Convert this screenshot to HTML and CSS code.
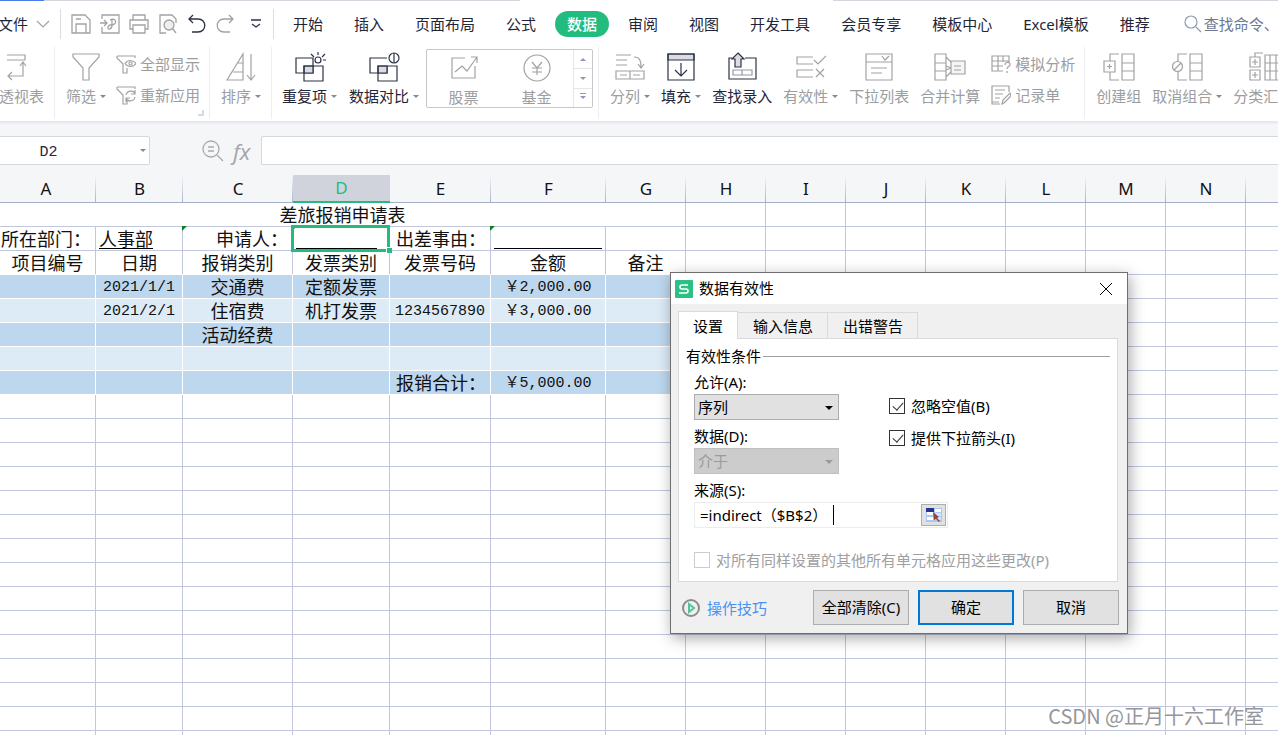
FILE: index.html
```html
<!DOCTYPE html>
<html lang="zh-CN">
<head>
<meta charset="utf-8">
<title>差旅报销申请表</title>
<link rel="stylesheet" href="styles.css">
</head>
<body>
<header class="toolbar">
  <div class="doc-strip"><span class="strip-active"></span><span class="strip-tab"></span><span class="strip-gap"></span><span class="strip-rest"></span></div>
  <nav class="menu">
    <button class="file-btn">文件<svg width="14" height="8" viewBox="0 0 14 8"><path d="M1 1l6 6 6-6"/></svg></button>
    <span class="menu-sep"></span>
    <div class="quick">
      <button aria-label="保存"><svg width="20" height="20" viewBox="0 0 20 20"><path d="M1 1h13l5 5v13H1zM5 19v-9h10v9M5 5h5"/></svg></button>
      <button aria-label="输出为PDF"><svg width="20" height="20" viewBox="0 0 20 20"><path d="M2 5V1h17v18H2v-6M0 9h7M4 6l3 3-3 3M10 6c6-3 8 4 2 5M12 6v5c0 5-5 5-4 2s5-2 5-2"/></svg></button>
      <button aria-label="打印"><svg width="20" height="20" viewBox="0 0 20 20"><path d="M4 6V1h12v5M4 15H1V6h18v9h-3M4 11h12v8H4z"/></svg></button>
      <button aria-label="打印预览"><svg width="20" height="20" viewBox="0 0 20 20"><path d="M8 19H2V1h12l4 4v4M14 14l4 5"/><circle cx="11" cy="11" r="5" fill="#eee"/></svg></button>
      <button aria-label="撤销" class="dark"><svg width="20" height="20" viewBox="0 0 20 20"><path d="M6 1L2 5l4 4M2 5h9c9 0 9 13 0 13H5"/></svg></button>
      <button aria-label="恢复"><svg width="20" height="20" viewBox="0 0 20 20"><path d="M13 1l4 4-4 4M17 5H8c-9 0-9 13 0 13h6"/></svg></button>
      <button aria-label="更多" class="more dark"><svg width="10" height="10" viewBox="0 0 10 10"><path d="M0 1h10M1 5l4 3 4-3"/></svg></button>
    </div>
    <span class="menu-sep"></span>
    <div class="tabs">
      <button>开始</button><button>插入</button><button>页面布局</button><button>公式</button><button class="on">数据</button><button>审阅</button><button>视图</button><button>开发工具</button><button>会员专享</button><button>模板中心</button><button>Excel模板</button><button>推荐</button>
    </div>
    <button class="search"><svg width="18" height="18" viewBox="0 0 18 18"><circle cx="7" cy="7" r="6"/><path d="M12 12l5 5"/></svg>查找命令、</button>
  </nav>
  <div class="ribbon">
    <div class="group first">
      <button class="big"><svg width="30" height="30" viewBox="0 0 30 30"><path d="M-5 3h23v5H-5zM16 11v13H2M13 14l3-4 3 4M5 20l-4 4 4 4"/></svg><span>透视表</span></button>
    </div>
    <div class="group filter">
      <button class="big"><svg width="30" height="30" viewBox="0 0 30 30"><path d="M2 2h26v3L18 16v12h-6V16L2 5z"/></svg><span class="arrow">筛选</span></button>
      <div class="stack">
        <button><svg width="20" height="20" viewBox="0 0 20 20"><path d="M1 2h18v2M1 2v2l6 6v9h4v-5"/><path d="M9 9.500c3-4 8-4 11 0-3 4-8 4-11 0z"/><circle cx="14.500" cy="9.500" r="1.500"/></svg>全部显示</button>
        <button><svg width="20" height="20" viewBox="0 0 20 20"><path d="M1 2h18v2M1 2v2l6 6v9h4v-3M10 10c1-5 8-5 9-1M19 5v4h-4M19 12c-1 5-8 5-9 1M10 17v-4h4"/></svg>重新应用</button>
      </div>
      <i class="corner"></i>
    </div>
    <div class="group sort">
      <button class="big"><svg width="30" height="30" viewBox="0 0 30 30"><path d="M17 2v26H1zM12 11h5M7 20h10M25 2v25M21 23l4 5 4-5"/></svg><span class="arrow">排序</span></button>
    </div>
    <div class="group dup">
      <button class="big dark"><svg width="32" height="30" viewBox="0 0 32 30"><path d="M2 6h17v15H2z"/><path d="M10 14h9v7h-9z" fill="#dcdde2"/><path d="M19 14h10v15H10V14z"/><circle cx="24" cy="8" r="3"/><path d="M24 0v3M17 2l3 3M31 2l-3 3M29 8h3"/></svg><span class="arrow">重复项</span></button>
      <button class="big dark"><svg width="32" height="30" viewBox="0 0 32 30"><path d="M19 6H2v15h17v-7"/><path d="M10 14h9v7h-9z" fill="#dcdde2"/><path d="M10 14h19v15H10z"/><circle cx="26" cy="6" r="5" fill="#fff"/><path d="M26 1v10"/></svg><span class="arrow">数据对比</span></button>
      <div class="gallery">
        <button class="big"><svg width="30" height="30" viewBox="0 0 30 30"><path d="M16 5H3v20h23V13M6 19l7-6 5 5L28 4M22 4h6v6"/></svg><span>股票</span></button>
        <button class="big"><svg width="30" height="30" viewBox="0 0 30 30"><circle cx="15" cy="15" r="13"/><path d="M10 9l5 6 5-6M15 15v7M10 15h10M10 19h10"/></svg><span>基金</span></button>
        <div class="spin"><button aria-label="上一行"><i class="up"></i></button><button aria-label="下一行"><i class="down"></i></button><button aria-label="展开"><i class="down line"></i></button></div>
      </div>
    </div>
    <div class="group tools">
      <button class="big"><svg width="30" height="30" viewBox="0 0 30 30"><path d="M1 3h15M1 8h11M1 13h11M1 19h28v8H1zM15 19v8M5 23h7M18 23h7M19 5c6 0 7 4 7 10M23 12l3 4 3-4"/></svg><span class="arrow">分列</span></button>
      <button class="big dark"><svg width="30" height="30" viewBox="0 0 30 30"><path d="M2 2h26v6H2z" fill="#dcdde2"/><path d="M2 2h26v26H2zM15 11v13M9 18l6 6 6-6"/></svg><span class="arrow">填充</span></button>
      <button class="big dark"><svg width="32" height="30" viewBox="0 0 32 30"><path d="M6 6H3v21h27V6H19"/><path d="M7 18h19v5H7zM16 18v5" opacity=".5"/><path d="M12 1l6 6h-3v8H9V7H6z" fill="#dcdde2"/></svg><span>查找录入</span></button>
      <button class="big"><svg width="30" height="30" viewBox="0 0 30 30"><path d="M17 5H1v7h16M17 18H1v7h16M18 8l4 4 8-8M20 17l8 8M28 17l-8 8"/></svg><span class="arrow">有效性</span></button>
      <button class="big"><svg width="30" height="30" viewBox="0 0 30 30"><path d="M2 2h26v26H2zM2 10h26M18 4l3 4 4-4M7 16h16M7 21h11"/></svg><span>下拉列表</span></button>
      <button class="big"><svg width="32" height="30" viewBox="0 0 32 30"><path d="M1 2h11v26H1zM1 11h11M1 19h11M12 5l6 6M12 25l6-6M12 14l5 2M12 18l5-2"/><path d="M17 9h14v13H17z" fill="#f5f5f5"/><path d="M20 14h7M20 18h7"/></svg><span>合并计算</span></button>
      <div class="stack">
        <button><svg width="20" height="20" viewBox="0 0 20 20"><path d="M12 17H1V2h17v6M1 7h17M1 12h11M7 2v15M12 2v6M14 11c0-4 6-3 5 0-1 2-3 2-3 4M16 17v2"/></svg>模拟分析</button>
        <button><svg width="20" height="20" viewBox="0 0 20 20"><path d="M8 17H1V1h17v6M4 5h10M4 9h8M4 13h5M1 17v2h8M11 19l1-4 7-7 1 3-7 7z"/></svg>记录单</button>
      </div>
    </div>
    <div class="group outline">
      <button class="big"><svg width="32" height="30" viewBox="0 0 32 30"><path d="M16 2H7v7M7 20v8h9M1 9h11v11H1zM4 14.500h5M6.500 12v5M19 2h12v26H19zM19 11h12M19 19h12"/></svg><span>创建组</span></button>
      <button class="big"><svg width="32" height="30" viewBox="0 0 32 30"><path d="M16 2H7v7M7 20v8h9M19 2h12v26H19zM19 11h12M19 19h12M3 18l7-7"/><circle cx="6.500" cy="14.500" r="5"/></svg><span class="arrow">取消组合</span></button>
      <button class="big"><svg width="32" height="30" viewBox="0 0 32 30"><path d="M3 5h10v10H3zM3 18h10v10H3zM5 10h6M8 7v6M5 23h6M8 20v6M8 5V1h8M18 3h22v25H18zM18 11h22M18 19h22M23 3v25M29 3v25"/></svg><span>分类汇总</span></button>
    </div>
  </div>
</header>

<div class="formula-bar">
  <label class="name-box"><input type="text" value="D2" aria-label="名称框"></label>
  <svg class="lookup" width="22" height="22" viewBox="0 0 22 22"><circle cx="9" cy="9" r="8"/><path d="M15 15l6 6M6 7h6M6 11h6"/></svg>
  <span class="fx">fx</span>
  <input class="formula" type="text" aria-label="编辑栏">
</div>

<main class="sheet">
  <table>
    <colgroup><col class="ca"><col class="cb"><col class="cc"><col class="cd"><col class="ce"><col class="cf"><col span="9"></colgroup>
    <thead><tr><th>A</th><th>B</th><th>C</th><th class="sel">D</th><th>E</th><th>F</th><th>G</th><th>H</th><th>I</th><th>J</th><th>K</th><th>L</th><th>M</th><th>N</th><th></th></tr></thead>
    <tbody id="rows">
      <tr><td colspan="7">差旅报销申请表</td></tr>
      <tr><td class="left">所在部门：</td><td class="left"><span class="fill">人事部</span></td><td class="right flag">申请人：</td><td class="left flag active"><span class="fill num">&nbsp;&nbsp;&nbsp;&nbsp;&nbsp;&nbsp;&nbsp;&nbsp;&nbsp;</span></td><td class="label">出差事由：</td><td class="left flag"><span class="fill num">&nbsp;&nbsp;&nbsp;&nbsp;&nbsp;&nbsp;&nbsp;&nbsp;&nbsp;&nbsp;&nbsp;&nbsp;</span></td></tr>
      <tr class="heads"><td>项目编号</td><td>日期</td><td>报销类别</td><td>发票类别</td><td>发票号码</td><td>金额</td><td>备注</td></tr>
      <tr class="band-a"><td></td><td class="num">2021/1/1</td><td>交通费</td><td>定额发票</td><td></td><td class="num">￥2,000.00</td></tr>
      <tr class="band-b"><td></td><td class="num">2021/2/1</td><td>住宿费</td><td>机打发票</td><td class="num">1234567890</td><td class="num">￥3,000.00</td></tr>
      <tr class="band-a"><td></td><td></td><td>活动经费</td></tr>
      <tr class="band-b"></tr>
      <tr class="band-a"><td></td><td></td><td></td><td></td><td class="label">报销合计：</td><td class="num">￥5,000.00</td></tr>
    </tbody>
  </table>
</main>

<section class="dialog" role="dialog" aria-label="数据有效性">
  <div class="title">
    <svg width="18" height="18" viewBox="0 0 18 18"><rect width="18" height="18" rx="1" fill="#2bc084"/><path d="M13 5H7q-2 0-2 2t2 2h4q2 0 2 2t-2 2H4" fill="none" stroke="#fff" stroke-width="1.600"/></svg>
    <h1>数据有效性</h1>
    <button aria-label="关闭"><svg width="14" height="14" viewBox="0 0 14 14"><path d="M1 1l12 12M13 1L1 13" stroke="#000"/></svg></button>
  </div>
  <div class="dlg-tabs"><button class="on">设置</button><button>输入信息</button><button>出错警告</button></div>
  <div class="panel">
    <h2>有效性条件</h2>
    <div class="form">
      <div class="fields">
        <label for="allow">允许(A):</label>
        <div class="select"><select id="allow"><option>序列</option></select></div>
        <label for="cond">数据(D):</label>
        <div class="select off"><select id="cond" disabled><option>介于</option></select></div>
        <label for="src">来源(S):</label>
        <div class="source"><input id="src" type="text" value="=indirect（$B$2）"><i class="caret"></i>
          <button aria-label="选择区域"><svg width="16" height="14" viewBox="0 0 16 14"><path d="M0 0h16v14H0z" fill="#a9c8f8"/><path d="M1 4h6v3H1zM1 9h6v3H1zM9 1h6v3H9z" fill="#fff"/><path d="M8 5h7v3H8zM9 9h6v3H9z" fill="#d3e3ff"/><path d="M0 0h8v4H0z" fill="#28348c"/><path d="M7 4l6 5-2 1 3 3-1 1-3-3-2 1z" fill="#9b4432"/></svg></button>
        </div>
      </div>
      <div class="checks">
        <label><input type="checkbox" checked>忽略空值(B)</label>
        <label><input type="checkbox" checked>提供下拉箭头(I)</label>
      </div>
    </div>
    <label class="apply"><input type="checkbox" disabled>对所有同样设置的其他所有单元格应用这些更改(P)</label>
  </div>
  <div class="actions">
    <a href="#"><svg width="18" height="18" viewBox="0 0 18 18" fill="none"><circle cx="9" cy="9" r="8" stroke="#8c8c8c" stroke-width="2"/><path d="M7 5v8l5-4z" stroke="#4fc795" stroke-width="2"/></svg>操作技巧</a>
    <button>全部清除(C)</button><button class="primary">确定</button><button>取消</button>
  </div>
</section>
<p class="credit">CSDN @正月十六工作室</p>
<script src="script.js"></script>
</body>
</html>
```
FILE: styles.css
```css
* { box-sizing: border-box; }
body {
  margin: 0; height: 100vh; overflow: hidden; position: relative;
  display: flex; flex-direction: column; background: #fff; color: #1f2638;
  font: 15px/22px "Noto Sans", "Noto Sans CJK SC", sans-serif;
}
button { font: inherit; color: inherit; background: none; border: 0; padding: 0; white-space: nowrap; }
input, select { font: inherit; color: inherit; }
h1, h2, p { margin: 0; font: inherit; }
svg { flex: none; }

/* menu bar */
.toolbar { flex: none; border-bottom: 1px solid #e6e7e9; box-shadow: 0 1px 2px #e4e5e8; position: relative; }
.doc-strip { display: flex; height: 1px; }
.strip-active { width: 44px; background: #4a7df0; }
.strip-tab { width: 476px; background: #d4d6dd; }
.strip-gap { width: 313px; }
.strip-rest { flex: 1; background: #d4d6dd; }
.menu { display: flex; align-items: center; height: 46px; overflow: hidden; }
.menu svg, .ribbon svg { fill: none; stroke: #a2a2a5; stroke-width: 1.2; }
.file-btn { flex: none; display: flex; align-items: center; gap: 8px; margin-left: -2px; width: 62px; }
.menu-sep { width: 1px; height: 30px; background: #dcdee3; flex: none; }
.quick { display: flex; align-items: center; gap: 9px; padding: 0 12px 0 10px; flex: none; }
.quick button { display: flex; }
.quick svg { stroke-width: 1.3; }
.quick .more { margin: 0 0 0 6px; }
.menu .dark svg, .ribbon .dark svg { stroke: #2b3245; }
.tabs { display: flex; gap: 7px; padding-left: 7px; flex: none; }
.tabs button { padding: 2px 12px; border-radius: 13px; }
.tabs .on { background: #22bd7e; color: #fff; font-weight: 500; }
.search { flex: none; display: flex; align-items: center; gap: 2px; margin-left: 22px; color: #6d7891; }
.search svg { stroke: #8d99b5; }

/* ribbon */
.ribbon { display: flex; height: 74px; overflow: hidden; color: #9c9da0; }
.group { flex: none; display: flex; gap: 11px; position: relative; height: 72px; padding: 4px 10px 0; border-right: 1px solid #eceef1; }
.group.first { margin-left: -1px; padding-left: 0; }
.group.filter { gap: 10px; padding: 4px 9px 0 11px; }
.group.sort { padding-left: 11px; }
.group.dup { gap: 12px; padding-right: 5px; }
.group.tools { padding: 4px 9px 0 11px; }
.group.outline { padding-left: 11px; border: 0; }
.big { display: flex; flex-direction: column; align-items: center; gap: 3px; padding-top: 1px; height: 58px; }
.dark { color: #1f2638; }
.arrow::after { content: ""; display: inline-block; border: 3px solid transparent; border-top-color: #7d8aa6; border-bottom: 0; margin: 0 0 4px 4px; }
.stack { display: flex; flex-direction: column; gap: 9px; padding-top: 2px; }
.stack button { display: flex; align-items: center; gap: 4px; }
.corner { position: absolute; right: 5px; bottom: 3px; width: 6px; height: 6px; border: solid #d5dae6; border-width: 0 2px 2px 0; }
.gallery { display: flex; width: 167px; height: 59px; margin: -2px 0 0 -5px; border: 1px solid #c6c7ca; border-radius: 2px; }
.gallery .big { flex: 1; padding-top: 3px; }
.spin { width: 19px; display: flex; flex-direction: column; border-left: 1px solid #e6e6e8; }
.spin button { flex: 1; display: flex; align-items: center; justify-content: center; border-bottom: 1px solid #e6e6e8; }
.spin button:last-child { border: 0; }
.up, .down { border: 3px solid transparent; border-top-color: #8d99b0; border-bottom: 0; }
.up { border-top: 0; border-bottom: 3px solid #8d99b0; }
.line { position: relative; }
.line::before { content: ""; position: absolute; left: -3px; top: -6px; width: 6px; height: 1px; background: #8d99b0; }

/* formula bar */
.formula-bar { flex: none; display: flex; align-items: center; height: 53px; background: #f5f6f8; padding-top: 4px; }
.name-box { width: 150px; position: relative; }
.name-box input { display: block; width: 100%; height: 29px; border: 1px solid #d6d8dc; border-left: 0; border-radius: 0 2px 2px 0; padding: 3px 52px 0 0; text-align: center; font: 15px "Liberation Mono", monospace; }
.name-box::after { content: ""; position: absolute; right: 4px; top: 13px; border: 3px solid transparent; border-top-color: #7d8aa6; border-bottom: 0; }
.lookup { margin-left: 52px; fill: none; stroke: #a9aaad; stroke-width: 1.3; }
.fx { width: 37px; padding-left: 9px; font: italic 22px/24px "Open Sans", sans-serif; color: #a4a5a8; }
.formula { flex: 1; height: 29px; border: 1px solid #d6d8dc; border-right: 0; border-radius: 2px 0 0 2px; }

/* sheet */
.sheet { flex: 1; min-height: 0; overflow: hidden; color: #111; }
table { table-layout: fixed; width: 1326px; border-collapse: separate; border-spacing: 0; }
col { width: 80px; }
.ca { width: 96px; } .cb { width: 87px; } .cc { width: 110px; } .cd { width: 97px; } .ce { width: 101px; } .cf { width: 115px; }
th { height: 28px; padding: 0; font-weight: 400; font-size: 17px; line-height: 26px; background: linear-gradient(#f5f6f8, #a9b4cc) right / 1px 100% no-repeat #f5f6f8; border-bottom: 1px solid #a5b0c8; }
th:first-child { padding-right: 4px; }
th.sel { background: #d0d3dc; color: #22bd7e; border-bottom: 2px solid #22bd7e; }
td { height: 24px; padding: 2px 0 0; text-align: center; font-size: 18px; line-height: 21px; white-space: nowrap; border: solid #c1c7dd; border-width: 0 1px 1px 0; }
.left { text-align: left; padding-left: 3px; }
td.left:first-child { padding-left: 1px; }
.right { text-align: right; padding-right: 4px; }
.label { text-align: left; padding-left: 6px; }
td.num { font-family: "Liberation Mono", "Noto Sans CJK SC", monospace; font-size: 15px; }
.fill { display: inline-block; height: 20px; line-height: 21px; vertical-align: top; border-bottom: 1px solid #000; }
.fill.num { font-family: "Liberation Mono", monospace; font-size: 15px; }
.heads td:nth-child(-n+7) { border-bottom-color: #fff; }
.band-a td:nth-child(-n+7), .band-b td:nth-child(-n+7) { border-color: #fff; background: #bdd7ee; }
.band-b td:nth-child(-n+7) { background: #ddebf7; }
.flag, .active { position: relative; }
.flag::before { content: ""; position: absolute; left: -1px; top: -1px; border: solid transparent; border-width: 0 5px 5px 0; border-left: 0; border-top: 5px solid #0b8020; border-bottom: 0; }
.active::before { left: -1px; top: -1px; }
.active::after { content: ""; position: absolute; inset: -2px -1px -2px -2px; border: 3px solid #22bd7e; }
.handle { position: absolute; z-index: 1; right: -3px; bottom: -3px; width: 6px; height: 6px; background: #22bd7e; border: solid #fff; border-width: 1px 0 0 1px; }

/* dialog */
.dialog { position: absolute; left: 670px; top: 272px; width: 458px; color: #000; background: #f0f0f0; border: 1px solid #6e6e70; box-shadow: 2px 4px 14px rgba(0, 0, 0, .35); }
.title { display: flex; align-items: center; gap: 6px; height: 31px; padding: 0 14px 0 4px; background: #fff; }
.title h1 { flex: 1; line-height: 20px; padding-bottom: 2px; }
.title button { display: flex; }
.dlg-tabs { display: flex; align-items: flex-end; margin: 7px 7px 0; }
.dlg-tabs button { height: 26px; padding: 0 14px 0 15px; border: 1px solid #dadada; border-width: 1px 1px 0 0; }
.dlg-tabs .on { height: 28px; padding: 0 14px; margin-bottom: -1px; position: relative; background: #fff; border-left-width: 1px; }
.panel { margin: 0 9px 0 7px; padding: 6px 7px 9px; background: #fff; border: 1px solid #dadada; }
.panel h2 { display: flex; align-items: center; gap: 2px; }
.panel h2::after { content: ""; flex: 1; height: 1px; background: #a0a0a0; }
.form { display: flex; gap: 50px; padding: 5px 8px 0; }
.fields { width: 145px; display: flex; flex-direction: column; }
.fields label { height: 22px; line-height: 20px; }
.select { position: relative; margin-bottom: 6px; }
.select select { display: block; width: 100%; height: 26px; appearance: none; background: #e1e1e1; border: 1px solid #adadad; border-radius: 0; padding: 0 3px; opacity: 1; }
.select::after { content: ""; position: absolute; right: 6px; top: 12px; border: 4px solid transparent; border-top-color: #000; border-bottom: 0; }
.off select { background: #ccc; border-color: #bfbfbf; color: #9b9b9b; }
.off::after { border-top-color: #9b9b9b; }
.source { position: relative; display: flex; align-items: center; width: 254px; height: 26px; padding-right: 1px; border: 1px solid #ececec; }
.source input { flex: 1; min-width: 0; height: 24px; border: 0; padding: 0 5px 2px; background: none; }
.source button { width: 25px; height: 22px; display: flex; align-items: center; justify-content: center; background: #e1e1e1; border: 1px solid #adadad; }
.caret { position: absolute; left: 138px; top: 2px; width: 1px; height: 20px; background: #000; }
.checks { padding-top: 22px; display: flex; flex-direction: column; gap: 8px; }
.checks label, .apply { display: flex; align-items: center; gap: 6px; height: 24px; }
.apply { margin: 20px 8px 0; color: #a0a0a0; }
input[type="checkbox"] { appearance: none; flex: none; position: relative; width: 16px; height: 16px; margin: 0; border: 1px solid #333; background: #fff; }
input[type="checkbox"]:disabled { border-color: #ccc; }
input[type="checkbox"]:checked::after { content: ""; position: absolute; left: 5px; top: 1px; width: 5px; height: 9px; border: solid #333; border-width: 0 1px 1px 0; transform: rotate(42deg); }
.actions { display: flex; gap: 9px; padding: 8px 8px 8px 11px; }
.actions a { flex: 1; display: flex; align-items: center; gap: 7px; color: #4a90f0; text-decoration: none; }
.actions button { width: 96px; height: 35px; padding-bottom: 2px; background: #e1e1e1; border: 1px solid #adadad; }
.actions .primary { border: 2px solid #0078d7; }
.credit { position: absolute; right: 14px; bottom: 6px; font: 20px/26px "Noto Sans CJK SC", sans-serif; color: #96969a; }
```
FILE: script.js
```js
// Fill every row out to column O and add the blank rows below the data.
const COLUMNS = 15;
const ROWS = 23;
const body = document.getElementById('rows');

while (body.rows.length < ROWS) body.insertRow();

for (const row of body.rows) {
  let used = 0;
  for (const cell of row.cells) used += cell.colSpan;
  for (; used < COLUMNS; used++) row.insertCell();
}

const handle = document.createElement('i');
handle.className = 'handle';
body.querySelector('.active').append(handle);
```
